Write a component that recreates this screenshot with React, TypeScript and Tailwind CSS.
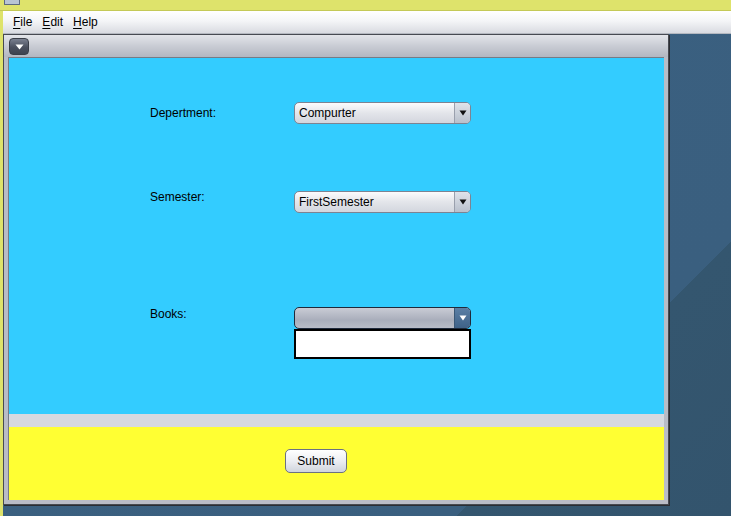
import React from "react";

function Arrow({ color = "#111" }: { color?: string }) {
  return (
    <svg width="8" height="6" viewBox="0 0 8 6">
      <path d="M0.5 0.5 L7.5 0.5 L4 5.5 Z" fill={color} />
    </svg>
  );
}

function Combo({ value, active = false }: { value?: string; active?: boolean }) {
  return (
    <div
      className={
        active
          ? "flex h-[22px] w-[177px] overflow-hidden rounded-[5px] border border-[#1f2a3b] bg-[linear-gradient(#c9ccd5,#a9aebb_60%,#b8bcc7)]"
          : "flex h-[22px] w-[177px] overflow-hidden rounded-[5px] border border-[#7d8392] bg-[linear-gradient(#fbfbfc,#e3e5ea_50%,#d3d6de)]"
      }
    >
      <div className="flex flex-1 items-center pl-[4px] text-[12px] text-black">{value}</div>
      <div
        className={
          active
            ? "flex w-[16px] items-center justify-center border-l border-[#3a5877] bg-[linear-gradient(#5b7fa5,#3f6288)]"
            : "flex w-[16px] items-center justify-center border-l border-[#9aa0ad] bg-[linear-gradient(#dfe3ea,#b9c0cc)]"
        }
      >
        <Arrow color={active ? "#ffffff" : "#111111"} />
      </div>
    </div>
  );
}

function Mnemonic({ label }: { label: string }) {
  return (
    <span className="px-[5px]">
      <span className="underline underline-offset-2">{label[0]}</span>
      {label.slice(1)}
    </span>
  );
}

export default function App() {
  return (
    <div
      className="flex h-[516px] w-[731px] flex-col overflow-hidden bg-[linear-gradient(135deg,#3b6181_0%,#3a5f7f_78%,#34566f_78%,#33546d_100%)] text-[12px] text-black"
      style={{ fontFamily: '"Liberation Sans", Arial, sans-serif' }}
    >
      {/* outer frame title strip */}
      <div className="h-[11px] border-b border-[#c4c957] bg-[#dee36b] pl-[4px]">
        <div className="h-[5px] w-[16px] rounded-b-[1px] border border-t-0 border-[#5d6a80] bg-[#b8c4d4]" />
      </div>

      <div className="flex flex-1">
        <div className="w-[3px] bg-[#dee36b]" />

        <div className="flex flex-1 flex-col">
          {/* menubar */}
          <div className="flex h-[23px] items-center border-b border-[#b4b8c0] bg-[linear-gradient(#ffffff,#f4f5f7_45%,#d9dbe1)] pl-[5px]">
            <Mnemonic label="File" />
            <Mnemonic label="Edit" />
            <Mnemonic label="Help" />
          </div>

          {/* internal frame */}
          <div className="flex h-[471px] w-[666px] flex-col border border-[#474a52] bg-[#b9bcc6] shadow-[1px_1px_0_#2a2d33]">
            <div className="flex h-[22px] items-start bg-[linear-gradient(#e3e5ea,#c9ccd4_50%,#b3b7c1)] pl-[5px] pt-[3px]">
              <div className="flex h-[17px] w-[20px] items-center justify-center rounded-[4px] border border-[#3a3e48] bg-[linear-gradient(#7a8090,#4b505e_55%,#3e4350)]">
                <svg width="9" height="6" viewBox="0 0 9 6">
                  <path d="M0.5 0.5 L8.5 0.5 L4.5 5.5 Z" fill="#ffffff" />
                </svg>
              </div>
            </div>

            <div className="ml-[4px] mr-[4px] flex flex-col border-l border-t border-[#777b86]">
              {/* blue panel */}
              <div className="h-[356px] bg-[#33ccff] pl-[141px]">
                <div className="mt-[44px] flex items-start">
                  <div className="mt-[4px] w-[144px] leading-[14px]">Depertment:</div>
                  <Combo value="Compurter" />
                </div>
                <div className="mt-[67px] flex items-start">
                  <div className="-mt-[1px] w-[144px] leading-[14px]">Semester:</div>
                  <Combo value="FirstSemester" />
                </div>
                <div className="mt-[94px] flex items-start">
                  <div className="w-[144px] leading-[14px]">Books:</div>
                  <div className="flex flex-col">
                    <Combo active />
                    <div className="h-[30px] w-[177px] border-2 border-black bg-white" />
                  </div>
                </div>
              </div>

              <div className="h-[13px] bg-[#d6d9e0]" />

              {/* yellow panel */}
              <div className="h-[73px] bg-[#ffff33] pl-[276px] pt-[22px]">
                <button className="h-[24px] w-[62px] rounded-[5px] border border-[#6b7182] bg-[linear-gradient(#ffffff,#eceef2_50%,#d0d4dc)] text-[12px] text-black">
                  Submit
                </button>
              </div>
            </div>
          </div>
        </div>
      </div>
    </div>
  );
}
